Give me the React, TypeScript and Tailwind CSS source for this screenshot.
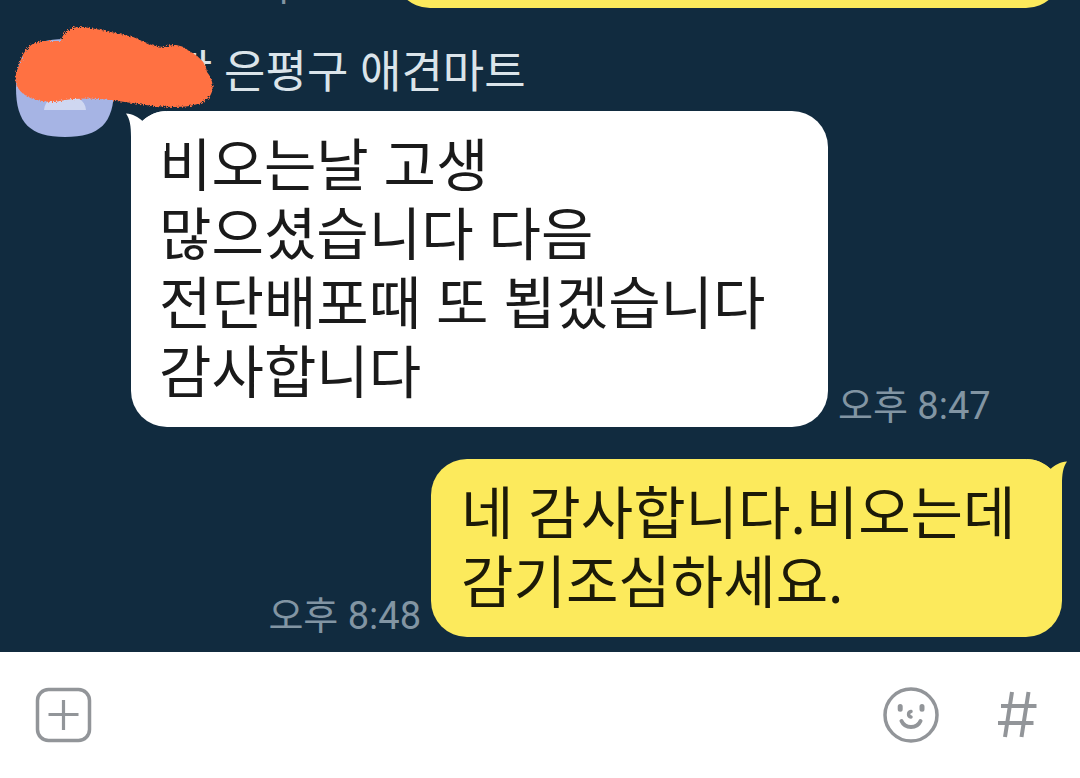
import React from 'react';

interface Message {
  id: number;
  mine: boolean;
  text: string;
  time: string;
  bubbleClass: string;
}

const SENDER = '장 은평구 애견마트';

const messages: Message[] = [
  { id: 1, mine: true, text: '네 알겠습니다', time: '오후 8:36', bubbleClass: 'w-[668px]' },
  {
    id: 2,
    mine: false,
    text: '비오는날 고생\n많으셨습니다 다음\n전단배포때 또 뵙겠습니다\n감사합니다',
    time: '오후 8:47',
    bubbleClass: 'w-[697px]',
  },
  { id: 3, mine: true, text: '네 감사합니다.비오는데\n감기조심하세요.', time: '오후 8:48', bubbleClass: 'w-[631px]' },
];

function Tail({ mine }: { mine: boolean }) {
  return (
    <svg
      viewBox="0 0 40 40"
      aria-hidden="true"
      className={`absolute top-0 h-10 w-10 ${
        mine ? '-right-[5px] -scale-x-100 text-[#fcea5c]' : '-left-[5px] text-white'
      }`}
    >
      <path d="M0 2.500C7 3 12 6 16.500 10C23 4 31 0 40 0V40H5V26C5 15 4 8 0 2.500Z" fill="currentColor" />
    </svg>
  );
}

function Bubble({ message }: { message: Message }) {
  const { mine, text, bubbleClass } = message;
  return (
    <div className="relative min-w-0">
      <div
        className={`max-w-full rounded-[36px] pt-[19px] pb-[21px] ${bubbleClass} ${
          mine ? 'bg-[#fcea5c] px-[30px] text-[#1c1a08]' : 'bg-white px-7 text-[#1a1a1a]'
        }`}
      >
        <p className="whitespace-pre-line text-[57px] leading-[69px]">{text}</p>
      </div>
      <Tail mine={mine} />
    </div>
  );
}

function MessageRow({ message }: { message: Message }) {
  return (
    <div className={`flex items-end gap-[10px] ${message.mine ? 'flex-row-reverse' : ''}`}>
      <Bubble message={message} />
      <time className="shrink-0 font-['Roboto','Noto_Sans_CJK_KR',sans-serif] text-[38px] leading-[42px] text-[#8295a3]">
        {message.time}
      </time>
    </div>
  );
}

function Avatar() {
  return (
    <div className="relative z-10 h-[98px] w-[98px] shrink-0">
      <svg viewBox="0 0 98 98" className="h-full w-full" role="img" aria-label="프로필">
        <path d="M49 0C84 0 98 14 98 49S84 98 49 98S0 84 0 49S14 0 49 0Z" fill="#a6b4e4" />
        <path d="M28 71C29 60 38 57 49 57S69 60 70 71Z" fill="#cfd7f1" />
      </svg>
      <svg viewBox="0 0 200 86" className="absolute -left-[1px] -top-[13px] h-[86px] w-[200px]" aria-hidden="true">
        <defs>
          <filter id="brush" x="-5%" y="-8%" width="110%" height="116%">
            <feTurbulence type="fractalNoise" baseFrequency="0.7" numOctaves="2" seed="4" />
            <feDisplacementMap in="SourceGraphic" scale="5" />
          </filter>
        </defs>
        <path
          d="M4 40C8 22 18 14 32 15L46 15C48 6 55 1 65 1C80 2 105 8 118 11C130 16 138 21 150 21C158 17 168 19 174 25C184 30 191 37 192 46C199 55 199 64 195 70C189 78 175 81 160 81C137 81 120 77 101 75C85 72 60 71 40 76C22 76 7 71 2 60C-1 53 1 46 4 40Z"
          fill="#ff7143"
          filter="url(#brush)"
        />
      </svg>
    </div>
  );
}

function InputBar() {
  return (
    <footer className="flex h-[126px] shrink-0 items-center bg-white px-8 text-[#929599]">
      <button type="button" aria-label="추가">
        <svg viewBox="0 0 62 62" className="h-[62px] w-[62px]" fill="none" stroke="currentColor">
          <rect x="5.500" y="5.500" width="52" height="51" rx="11" strokeWidth="3.500" />
          <path d="M31.500 16V46M16.500 30.500H46.500" strokeWidth="3.200" />
        </svg>
      </button>
      <button type="button" aria-label="이모티콘" className="ml-auto">
        <svg viewBox="0 0 62 62" className="h-[62px] w-[62px]" fill="none" stroke="currentColor" strokeLinecap="round">
          <circle cx="31" cy="31" r="26" strokeWidth="3.500" />
          <path d="M20.200 22.500V25.200M42 22.500V25.200" strokeWidth="5" />
          <path d="M31 27.500C27.800 28 27.800 32.500 31 33" strokeWidth="3.500" />
          <path d="M21.500 37C25 45 37 45 40.500 37" strokeWidth="4" />
        </svg>
      </button>
      <button type="button" aria-label="샵검색" className="ml-11">
        <svg viewBox="0 0 62 62" className="h-[62px] w-[62px]" fill="none" stroke="currentColor" strokeWidth="4">
          <path d="M26 8L19 53M42.500 8L35.500 53M15 22H50.500M12 39H47.500" />
        </svg>
      </button>
    </footer>
  );
}

export default function App() {
  return (
    <div className="flex h-screen flex-col overflow-hidden font-['Noto_Sans','Noto_Sans_CJK_KR',sans-serif]">
      <main className="flex min-h-0 flex-1 flex-col justify-end overflow-hidden bg-[#112b3f] pb-[15px] pl-4 pr-[18px]">
        <MessageRow message={messages[0]} />
        <section className="mt-[31px] flex items-start gap-[17px]">
          <Avatar />
          <div className="min-w-0 flex-1">
            <h2 className="pb-2 pl-10 text-[45px] leading-[64px] text-[#dbe4ea]">{SENDER}</h2>
            <MessageRow message={messages[1]} />
          </div>
        </section>
        <div className="mt-8">
          <MessageRow message={messages[2]} />
        </div>
      </main>
      <InputBar />
    </div>
  );
}
